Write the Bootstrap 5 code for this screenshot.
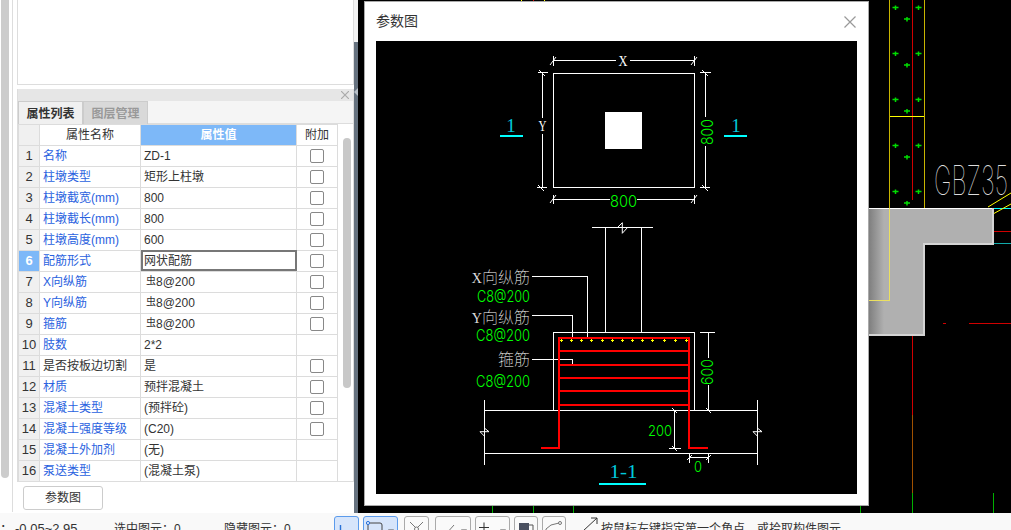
<!DOCTYPE html>
<html lang="zh-CN">
<head>
  <meta charset="UTF-8" />
  <meta name="viewport" content="width=device-width, initial-scale=1.0" />
  <title>参数图</title>
  <link href="https://cdn.jsdelivr.net/npm/bootstrap@5.3.0/dist/css/bootstrap.min.css" rel="stylesheet" />
  <style>
    html, body { height: 530px; overflow: hidden; }
    body { font-family: "Liberation Sans", "Noto Sans CJK SC", sans-serif; font-size: 12px; color: #333; background: #fff; }
    .work-row { height: 513px; }

    /* left panel */
    .side-panel { width: 354px; background: #fff; }
    .side-rail { width: 13px; padding-left: 1px; border-right: 1px solid #ddd; margin-bottom: 1px; }
    .rail-thumb { width: 8px; height: 478px; background: #ccc; border-radius: 0 0 4px 4px; }
    .side-body { width: 341px; padding-left: 4px; }
    .top-box { height: 85px; border: 1px solid #ddd; border-top: 0; }
    .prop-panel { margin-top: 4px; height: 393px; border: 1px solid #ddd; border-top: 0; }
    .panel-head { height: 12px; background: #e6e6e6; color: #aaa; }
    .tab-row { height: 23px; background: #f5f5f5; border-bottom: 1px solid #ddd; }
    .tab-row .nav-link { width: 65px; height: 23px; padding: 3px 0 0; text-align: center; font-weight: 700; font-size: 12px; border: 1px solid #ccc; border-bottom: 0; }
    .tab-row .nav-link.active { background: #f0f0f0; color: #333; }
    .tab-row .nav-link.off { background: #d9d9d9; color: #999; }
    .prop-scroll { height: 358px; overflow: hidden; }
    .prop-table { width: 319px; table-layout: fixed; margin: 0; border-color: #dcdcdc; font-size: 12px; }
    .prop-table th, .prop-table td { height: 21px; padding: 0 3px; line-height: 20px; vertical-align: middle; white-space: nowrap; color: #333; font-weight: 400; }
    .prop-table th { text-align: center; background: #fff; }
    .prop-table .num-col { width: 21px; padding: 0; text-align: center; background: #f0f0f0; font-size: 13px; }
    .prop-table .name-col { width: 101px; }
    .prop-table .val-col { width: 156px; }
    .prop-table .add-col { width: 41px; padding: 0; text-align: center; }
    .prop-table th.val-head { background: #7db8f8; color: #fff; font-weight: 700; }
    .prop-table td.num-on { background: #7db8f8; color: #fff; font-weight: 700; }
    .prop-table td.name-link { color: #2a62e0; }
    .prop-table td.cell-on { outline: 2px solid #777; outline-offset: -2px; }
    .rebar-mark { font-size: 10px; line-height: 1; vertical-align: 2px; margin-left: 2px; }
    .prop-table .form-check-input { width: 14px; height: 14px; margin: 1px 0 0 13px; border: 1px solid #888; border-radius: 2px; display: block; }
    .prop-track { width: 15px; padding: 14px 0 0 5px; }
    .track-thumb { width: 8px; height: 250px; background: #c8c8c8; border-radius: 4px; }
    .param-btn { width: 80px; height: 24px; margin: 4px 0 0 6px; padding: 0; font-size: 12px; color: #333; background: #fff; border: 1px solid #ccc; border-radius: 3px; }

    /* splitter between panel and canvas */
    .side-split { width: 4px; position: relative; background: linear-gradient(#f3f3f3 42px, #66727f 42px); }
    .side-split::after { content: ""; position: absolute; top: 88px; left: 0; border: 4px solid transparent; border-right-color: #b8c0c8; border-left: 0; }

    /* cad canvas */
    .cad-canvas { background: #000; position: relative; }
    .cad-bg { position: absolute; inset: 0; display: block; }
    .cad-dialog { position: absolute; left: 6px; top: 1px; width: 505px; height: 505px; border: 1px solid #aaa; border-radius: 0; padding: 0 11px 11px; background: #fff; }
    .dlg-head { height: 39px; font-size: 14px; color: #333; }
    .dlg-head svg { margin-right: 1px; }
    .dlg-x { display: block; }
    .dlg-draw { display: block; width: 481px; height: 453px; background: #000; }
    .cad-thin { font-family: Inter, Lato, "Liberation Sans", sans-serif; font-weight: 100; }
    .cad-green { font-family: Inter, Lato, "Liberation Sans", sans-serif; font-weight: 300; }
    .cad-serif { font-family: "Liberation Serif", serif; }
    .cad-label { font-family: "Liberation Serif", "Noto Sans CJK SC", serif; font-weight: 100; }

    /* status bar */
    .status-bar { height: 17px; overflow: hidden; background: #f9f9f9; font-size: 12px; line-height: 18px; color: #333; white-space: nowrap; }
    .st-range { width: 114px; padding-top: 7px; font-size: 13px; }
    .st-sel { width: 110px; padding-top: 7px; }
    .st-hide { width: 110px; padding-top: 7px; }
    .st-lead { display: inline-block; width: 15px; }
    .tool-group { padding-top: 3px; }
    .tool-btn { height: 24px; padding: 0; border: 1px solid #aaa; border-radius: 3px; background: #fafafa; display: block; }
    .tool-btn svg { display: block; }
    .tool-btn.on { background: #d6e5fb; border-color: #5b9bec; }
    .tool-gap { margin-left: 2px; }
    .st-tip { padding: 7px 0 0 3px; }
  </style>
</head>
<body>
  <div class="work-row d-flex">
    <aside class="side-panel d-flex flex-shrink-0">
      <div class="side-rail flex-shrink-0"><div class="rail-thumb"></div></div>
      <div class="side-body d-flex flex-column">
        <div class="top-box"></div>
        <div class="prop-panel d-flex flex-column">
          <div class="panel-head d-flex justify-content-end align-items-center pe-1">
            <svg width="8" height="8" viewBox="0 0 8 8"><path d="M0 0L8 8M8 0L0 8" stroke="#aaa" stroke-width="1.2" /></svg>
          </div>
          <ul class="nav tab-row">
            <li class="nav-item"><a class="nav-link active" href="#">属性列表</a></li>
            <li class="nav-item"><a class="nav-link off" href="#">图层管理</a></li>
          </ul>
          <div class="prop-scroll d-flex">
            <table class="table table-bordered prop-table">
              <thead>
                <tr><th class="num-col"></th><th class="name-col">属性名称</th><th class="val-col val-head">属性值</th><th class="add-col">附加</th></tr>
              </thead>
              <tbody>
                <tr><td class="num-col">1</td><td class="name-link">名称</td><td>ZD-1</td><td class="add-col"><input class="form-check-input" type="checkbox"></td></tr>
                <tr><td class="num-col">2</td><td class="name-link">柱墩类型</td><td>矩形上柱墩</td><td class="add-col"><input class="form-check-input" type="checkbox"></td></tr>
                <tr><td class="num-col">3</td><td class="name-link">柱墩截宽(mm)</td><td>800</td><td class="add-col"><input class="form-check-input" type="checkbox"></td></tr>
                <tr><td class="num-col">4</td><td class="name-link">柱墩截长(mm)</td><td>800</td><td class="add-col"><input class="form-check-input" type="checkbox"></td></tr>
                <tr><td class="num-col">5</td><td class="name-link">柱墩高度(mm)</td><td>600</td><td class="add-col"><input class="form-check-input" type="checkbox"></td></tr>
                <tr><td class="num-col num-on">6</td><td class="name-link">配筋形式</td><td class="cell-on">网状配筋</td><td class="add-col"><input class="form-check-input" type="checkbox"></td></tr>
                <tr><td class="num-col">7</td><td class="name-link">X向纵筋</td><td><span class="rebar-mark">虫</span>8@200</td><td class="add-col"><input class="form-check-input" type="checkbox"></td></tr>
                <tr><td class="num-col">8</td><td class="name-link">Y向纵筋</td><td><span class="rebar-mark">虫</span>8@200</td><td class="add-col"><input class="form-check-input" type="checkbox"></td></tr>
                <tr><td class="num-col">9</td><td class="name-link">箍筋</td><td><span class="rebar-mark">虫</span>8@200</td><td class="add-col"><input class="form-check-input" type="checkbox"></td></tr>
                <tr><td class="num-col">10</td><td class="name-link">肢数</td><td>2*2</td><td class="add-col"></td></tr>
                <tr><td class="num-col">11</td><td>是否按板边切割</td><td>是</td><td class="add-col"><input class="form-check-input" type="checkbox"></td></tr>
                <tr><td class="num-col">12</td><td class="name-link">材质</td><td>预拌混凝土</td><td class="add-col"><input class="form-check-input" type="checkbox"></td></tr>
                <tr><td class="num-col">13</td><td class="name-link">混凝土类型</td><td>(预拌砼)</td><td class="add-col"><input class="form-check-input" type="checkbox"></td></tr>
                <tr><td class="num-col">14</td><td class="name-link">混凝土强度等级</td><td>(C20)</td><td class="add-col"><input class="form-check-input" type="checkbox"></td></tr>
                <tr><td class="num-col">15</td><td class="name-link">混凝土外加剂</td><td>(无)</td><td class="add-col"></td></tr>
                <tr><td class="num-col">16</td><td class="name-link">泵送类型</td><td>(混凝土泵)</td><td class="add-col"></td></tr>
                <tr><td class="num-col"></td><td></td><td></td><td class="add-col"></td></tr>
              </tbody>
            </table>
            <div class="prop-track"><div class="track-thumb"></div></div>
          </div>
        </div>
        <div><button class="btn param-btn" type="button">参数图</button></div>
      </div>
    </aside>
    <div class="side-split flex-shrink-0"></div>

    <main class="cad-canvas flex-grow-1">
      <!-- background drawing, viewBox uses page pixels -->
      <svg class="cad-bg" width="653" height="513" viewBox="358 0 653 513">
        <defs>
          <linearGradient id="wallFade" x1="869" x2="884" y1="0" y2="0" gradientUnits="userSpaceOnUse">
            <stop offset="0" stop-color="#7f7f7f" /><stop offset="1" stop-color="#b0b0b0" />
          </linearGradient>
          <pattern id="rebarDots" x="889" y="0" width="35" height="46" patternUnits="userSpaceOnUse">
            <path d="M3.5 7.5h6M6.5 5.5v4.5M26.5 7.5h6M29.5 5.5v4.5M15 19h6M18 17v4.5" stroke="#0d0" stroke-width="1.5" fill="none" />
          </pattern>
        </defs>
        <rect x="889" y="0" width="35" height="208" fill="url(#rebarDots)" />
        <g fill="none" shape-rendering="crispEdges">
          <path d="M889.5 0V208M924.5 0V208" stroke="#c8b400" />
          <path d="M912.5 0V200M912.5 335V415" stroke="#d00000" />
          <path d="M912.5 415V493" stroke="#a05000" />
          <path d="M912.5 493V513M993.5 493V513M860.5 506V513M492.5 506V513M533.5 506V513M573.5 506V513" stroke="#00b000" />
          <path d="M890 116.5H924" stroke="#ff0" />
          <path d="M993 208.5H1011" stroke="#0ff" />
          <path d="M993 231.5H1011M943 323.5H946M969 323.5H1011" stroke="#d00000" />
          <path d="M993 243.5H1011" stroke="#1aa" />
          <path d="M521.5 0V1M544.5 0V1" stroke="#ff0" />
          <path d="M533.5 0V1" stroke="#d00" />
        </g>
        <path d="M988 207L1011 193M993 214L1011 204" stroke="#ff0" fill="none" />
        <path d="M869 208H993V243H924V335H869Z" fill="url(#wallFade)" />
        <path d="M869 208.5H993" stroke="#fff" shape-rendering="crispEdges" />
        <path d="M993 208V243.5H924V335H869" stroke="#d4d4d4" stroke-width="2" fill="none" shape-rendering="crispEdges" />
        <path d="M889.5 208V300.5H869" stroke="#ebe060" fill="none" shape-rendering="crispEdges" />
        <text x="934" y="195" class="cad-thin" font-size="41" fill="#ddd" textLength="74" lengthAdjust="spacingAndGlyphs">GBZ35</text>
      </svg>

      <div class="card cad-dialog">
        <div class="dlg-head d-flex justify-content-between align-items-center">
          <span>参数图</span>
          <svg class="dlg-x" width="12" height="12" viewBox="0 0 12 12"><path d="M.5.5L11.5 11.5M11.5.5L.5 11.5" stroke="#999" stroke-width="1.2" /></svg>
        </div>
        <svg class="dlg-draw" viewBox="376 41 481 453">
          <!-- plan view -->
          <g fill="none" stroke="#fff" shape-rendering="crispEdges">
            <rect x="553.5" y="73.5" width="141" height="114" />
            <path d="M553 60.5H616M630 60.5H695M542.5 73V118M542.5 134V187M705.5 73V117M705.5 146V187M553 199.5H610M637 199.5H695" />
            <path d="M553.5 56V66M694.5 56V66M553.5 195V204M694.5 195V204M538 72.5H548M537 187.5H547M700 72.5H711M700 187.5H710" />
          </g>
          <path d="M550 65L556 57M691 65L697 57M550 203L556 195M691 203L697 195M539 70L545 76M538 185L544 191M702 70L708 76M702 185L708 191" stroke="#fff" fill="none" />
          <rect x="605" y="112" width="37" height="37" fill="#fff" />
          <g class="cad-serif" fill="#fff" font-size="15" text-anchor="middle">
            <text x="623" y="66" textLength="9" lengthAdjust="spacingAndGlyphs">X</text>
            <text x="542.5" y="131" textLength="8" lengthAdjust="spacingAndGlyphs">Y</text>
          </g>
          <g class="cad-green" fill="#0f0" font-size="16">
            <text x="610" y="207" textLength="27" lengthAdjust="spacingAndGlyphs">800</text>
            <text transform="translate(713 145) rotate(-90)" textLength="26" lengthAdjust="spacingAndGlyphs">800</text>
            <text transform="translate(713 385) rotate(-90)" textLength="26" lengthAdjust="spacingAndGlyphs">600</text>
            <text x="648" y="436" font-size="15" textLength="24" lengthAdjust="spacingAndGlyphs">200</text>
            <text x="694" y="472" font-size="14" textLength="8" lengthAdjust="spacingAndGlyphs">0</text>
            <text x="477" y="302" textLength="53" lengthAdjust="spacingAndGlyphs">C8@200</text>
            <text x="476" y="341" textLength="54" lengthAdjust="spacingAndGlyphs">C8@200</text>
            <text x="476" y="387" textLength="54" lengthAdjust="spacingAndGlyphs">C8@200</text>
          </g>
          <g class="cad-serif" fill="#00c8dc" font-size="19" text-anchor="middle">
            <text x="511" y="132">1</text>
            <text x="736" y="132">1</text>
            <text x="623.5" y="478" textLength="28" lengthAdjust="spacingAndGlyphs">1-1</text>
          </g>
          <path d="M500 136H523M724 136H747M599 483.5H646" stroke="#0ff" stroke-width="2" fill="none" shape-rendering="crispEdges" />

          <!-- section view -->
          <g fill="none" stroke="#fff" shape-rendering="crispEdges">
            <path d="M592 227.5H653M605.5 227V332M641.5 227V332" />
            <path d="M553.5 410V332.5H694.5V410" />
            <path d="M484 410.5H757M484 453.5H757M484.5 400V465M757.5 400V465" />
            <path d="M532 276.5H587.5V339M532 315.5H572.5V339M532 359.5H572.5V365" />
            <path d="M708.5 332V358M708.5 385V410M700 332.5H715M674.5 410V449M669 448.5H681M689 457.5H709M689.5 453V463M708.5 453V463" />
          </g>
          <path d="M617.7 227.3L622.3 222.7V233.3L627.7 227.3M480 431.7H489L484.3 428M480 431.7L484.3 436M753 431.7H762L757.3 428M753 431.7L757.3 436M706 408L711 413M672 408L677 413M672 446L677 451M687 460L692 455M706 460L711 455" stroke="#fff" fill="none" />
          <g fill="none" stroke="#f00" stroke-width="2" shape-rendering="crispEdges">
            <path d="M541 448H559V338H689V448H708" />
            <path d="M559 351H689M559 365H689M559 378H689M559 391H689M559 405H689" />
          </g>
          <path d="M560 340.5h3M561.5 339v3M570 340.5h3M571.5 339v3M580 340.5h3M581.5 339v3M590 340.5h3M591.5 339v3M601 340.5h3M602.5 339v3M611 340.5h3M612.5 339v3M621 340.5h3M622.5 339v3M631 340.5h3M632.5 339v3M641 340.5h3M642.5 339v3M651 340.5h3M652.5 339v3M663 340.5h3M664.5 339v3M674 340.5h3M675.5 339v3M685 340.5h3M686.5 339v3" stroke="#ff0" fill="none" />
          <g class="cad-label" fill="#fff" font-size="16" text-anchor="end">
            <text x="530" y="283"><tspan font-size="14" fill="#ddd">X</tspan>向纵筋</text>
            <text x="530" y="323"><tspan font-size="14" fill="#ddd">Y</tspan>向纵筋</text>
            <text x="530" y="365">箍筋</text>
          </g>
        </svg>
      </div>
    </main>
  </div>

  <footer class="status-bar d-flex">
    <span class="st-range"><span class="st-lead">：</span>-0.05~2.95</span>
    <span class="st-sel">选中图元：0</span>
    <span class="st-hide">隐藏图元：0</span>
    <div class="tool-group d-flex gap-1">
      <button class="btn tool-btn on" type="button"><svg width="23" height="14" viewBox="0 0 23 14"><path d="M5.5 4V12.5H12" stroke="#2a72d8" stroke-width="1.4" fill="none" /></svg></button>
      <button class="btn tool-btn on" type="button"><svg width="33" height="14" viewBox="0 0 33 14"><path d="M4 2H16Q18 2 18 4V14M4 2V14" stroke="#444" fill="none" /><circle cx="4" cy="2" r="1.6" fill="#d6e5fb" stroke="#2a72d8" /><path d="M24 8.5H30L27 12Z" fill="#555" /></svg></button>
      <button class="btn tool-btn tool-gap" type="button"><svg width="23" height="14" viewBox="0 0 23 14"><path d="M5 1L18 14M18 1L5 14" stroke="#777" fill="none" /><circle cx="11.5" cy="8" r="2" fill="#fafafa" stroke="#777" /></svg></button>
      <button class="btn tool-btn tool-gap" type="button"><svg width="34" height="14" viewBox="0 0 34 14"><path d="M10 13L18 4" stroke="#777" fill="none" /><circle cx="12" cy="11" r="1.3" fill="#777" /><path d="M25 8.5H31L28 12Z" fill="#555" /></svg></button>
      <button class="btn tool-btn" type="button"><svg width="33" height="14" viewBox="0 0 33 14"><path d="M3 6.5H13M8 1.5V11.5" stroke="#333" fill="none" /><path d="M24 8.5H30L27 12Z" fill="#555" /></svg></button>
      <button class="btn tool-btn" type="button"><svg width="22" height="14" viewBox="0 0 22 14"><rect x="4" y="2" width="10" height="12" fill="#4a5060" /><path d="M14 4H18V14" stroke="#555" fill="none" /></svg></button>
      <button class="btn tool-btn" type="button"><svg width="22" height="14" viewBox="0 0 22 14"><path d="M3 14V8L8 4L16 2" stroke="#777" fill="none" /><circle cx="17" cy="2" r="1.5" fill="#fafafa" stroke="#777" /><path d="M11 10V14L14 12Z" fill="#555" /></svg></button>
    </div>
    <svg class="ms-3 mt-1 flex-shrink-0" width="16" height="14" viewBox="0 0 16 14" role="img"><path d="M1 14L15 1M9 1H15V7" stroke="#333" fill="none" /></svg>
    <span class="st-tip">按鼠标左键指定第一个角点，或拾取构件图元</span>
  </footer>

  <script src="https://cdn.jsdelivr.net/npm/bootstrap@5.3.0/dist/js/bootstrap.bundle.min.js"></script>
</body>
</html>
